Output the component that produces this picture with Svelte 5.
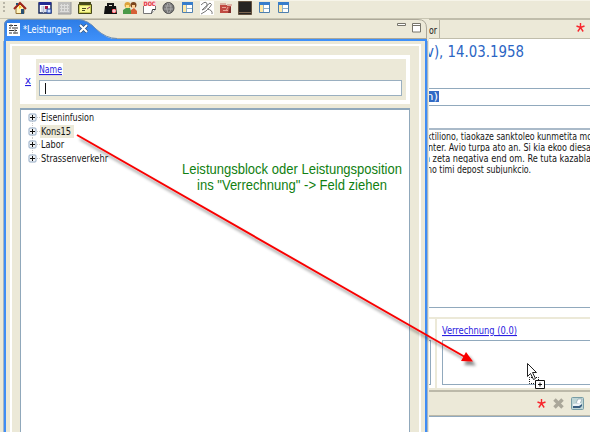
<script>
  const tree = [
    { label: 'Eiseninfusion', w: 53 },
    { label: 'Kons15', w: 30, selected: true },
    { label: 'Labor', w: 23 },
    { label: 'Strassenverkehr', w: 67 }
  ];
  const lines = [
    { text: 'ktiliono, tiaokaze sanktoleo kunmetita mo', x: -2, w: 165 },
    { text: 'nter. Avio turpa ato an. Si kia ekoo diesa', x: -1, w: 163 },
    { text: 'a zeta negativa end om. Re tuta kazabla', x: -4, w: 166 },
    { text: 'no timi depost subjunkcio.', x: -2, w: 104 }
  ];
</script>

{#snippet label(text, w, size = 11)}
  <svg class="label" width={w} height="13"><text x="0" y="10" font-size={size} textLength={w} lengthAdjust="spacingAndGlyphs">{text}</text></svg>
{/snippet}

{#snippet grid()}
  <svg width="13" height="13"><path fill="#fff" stroke="#4e7fae" d="M1.5 2.5h10v9h-10z"/><path fill="#377dcb" d="M1 1h11v3H1z"/><path stroke="#8fb2cc" d="M5.5 4v7M2 7.5h9"/><path fill="#ffe8a5" d="M2 4h3v7H2z"/></svg>
{/snippet}

{#snippet star()}
  <svg class="star" width="9" height="9"><path fill="none" stroke="#f8262c" stroke-width="1.4" d="M4.500 0v4.500M.500 3l4 1.500 4-1.500M1.800 8.500l2.700-4 2.700 4"/></svg>
{/snippet}

<div class="screen">
  <header class="toolbar">
    <i class="grip"></i>
    <svg style:margin-left="8px" width="14" height="14"><path fill="#fff4bd" stroke="#957030" d="M3 7v5.5h8V7L7 3z"/><path fill="none" stroke="#9d251d" stroke-width="2" d="m1 8 6-6 6 6"/><path fill="#285073" d="M8 8h3v5H8zM3 2h2v2H3z"/><path fill="#ffc62e" d="m6 4 3 2-3 2z"/></svg>
    <svg style:margin-left="11px" width="14" height="14"><path fill="#fff" stroke="#172a5c" stroke-width="1.5" d="M1 2h12v10H1z"/><path fill="#222b93" d="M1 1h12v3H1z"/><path stroke="#b3bdd6" d="M3 6h5M3 8h5M3 10h5M5.5 5v7"/><path fill="#a11944" d="M7 5h3v3H7z"/><path fill="#d1e3ff" stroke="#2546a6" d="M9 8h4v4H9z"/></svg>
    <svg style:margin-left="6px" width="14" height="14"><path fill="#bfbfbd" d="M0 1h13v12H0z"/><path stroke="#dededc" d="M3.5 3v8M6.5 3v8M9.5 3v8M2 4.5h9M2 7.5h9M2 10.5h9"/><path fill="none" stroke="#999" d="M13 1v12H0"/></svg>
    <svg style:margin-left="6px" width="14" height="14"><path fill="#c9ca55" stroke="#46481a" d="M.5 3.500h13v9H.5z"/><path fill="#46481a" d="M1 1h12v2H1z"/><path fill="#f8f895" d="M2 5h10v6H2z"/><path stroke="#4a4b24" d="M4 7.500h4M4 9.500h3"/><path stroke="#872e64" d="m9 8 3-2"/></svg>
    <svg style:margin-left="12px" width="14" height="14"><path fill="none" stroke="#171717" stroke-width="2" d="M4 6V3h5v3"/><path fill="#111" d="M1 5h11l1 8H0z"/><path fill="#e62935" d="M8 8h4v4H8z"/><path stroke="#fff" d="M8 10h4M10 8v4"/></svg>
    <svg style:margin-left="5px" width="15" height="14"><circle cx="4.500" cy="4" r="3" fill="#dca23c"/><path fill="#4b9a48" d="M0 13V9l3-2h4l2 6z"/><circle cx="10.500" cy="4" r="3" fill="#7c471f"/><path fill="#ffd094" d="M9 4h3v3H9z"/><path fill="#d66037" d="m8 9 3-2 3 3v3H8z"/><path fill="#ffdf83" d="M3 4h3v3H3z"/></svg>
    <svg style:margin-left="4px" width="15" height="14"><path fill="#fff" stroke="#777" d="M1.500 1v11.500h8l4-4V1z"/><path fill="#fff" stroke="#333" d="m9.500 12.500 1-4h3"/><path fill="#fbd9d9" d="M1 0h13v5H1z"/><text class="doc" x="1.500" y="5" font-size="6" font-weight="bold" textLength="12" lengthAdjust="spacingAndGlyphs">DOC</text></svg>
    <svg style:margin-left="5px" width="14" height="14"><circle cx="6.500" cy="7" r="5.500" fill="#777" stroke="#535353"/><path fill="none" stroke="#a8a8a8" d="M3 5h7M2 8h9M6 2q-3 5 0 10M7 2q4 5 0 10"/></svg>
    <span class="g first">{@render grid()}</span>
    <svg style:margin-left="6px" width="14" height="14"><path fill="#fff" d="M0 0h14v14H0z"/><path fill="none" stroke="#777" d="M1 4q5-5 6-1T2 9q4-4 8-7 3 1 0 4t-4 4l-5 3m6-5q6 1 5 5"/></svg>
    <svg style:margin-left="5px" width="14" height="14"><path fill="#c04a42" d="M1 4h11v8H1z"/><path fill="#dcb3a5" d="M1 2h6v2H1zm7 1h5v2H8z"/><path fill="none" stroke="#e9a498" d="M3 6.500h4M4 9.500h5M9 6l-2 4"/><path fill="#7f2e2b" d="M11 6h1v6h-3z"/></svg>
    <svg style:margin-left="5px" width="14" height="14"><path fill="#262423" stroke="#63513f" d="M.5.500h13v13H.500z"/><path stroke="#7d6651" d="M1 11.500h12"/></svg>
    <span class="g">{@render grid()}</span>
    <span class="g">{@render grid()}</span>
  </header>

  <main>
    <section class="view">
      <div class="tabbar">
        <svg class="tabshape" width="424" height="22">
          <defs><linearGradient id="tab" x2="0" y2="1"><stop stop-color="#2d7ce5"/><stop offset="1" stop-color="#3f91fa"/></linearGradient></defs>
          <path fill="#ece9d8" stroke="#aca899" d="M70 .500H414Q422.500.500 422.500 9V22M108 19.500H422"/>
          <path fill="url(#tab)" d="M0 22V6Q0 1 6 0H74Q84 1 92 10 102 20 113 20H423V22z"/>
          <path fill="none" stroke="#6e8eb4" d="M.500 20V6Q1 1 6 .500H74Q84 1 92 10 102 19.500 113 19.500"/>
        </svg>
        <svg class="docicon" width="13" height="13"><path fill="#fff" d="M0 0h13v13H0z"/><path stroke="#333" stroke-width="1.200" d="M2 2.500h4m1 0h3M2 5h2m1 0h6M2 7.500h5m1 0h2M2 10h3m1 0h5"/><path stroke="#777" d="M4 1v3m4 2v5"/></svg>
        <span class="tabtitle">{@render label('*Leistungen', 49)}</span>
        <svg class="close" width="9" height="9"><path stroke="#33547d" stroke-width="3.500" d="m1 1 7 7m0-7L1 8"/><path stroke="#fff" stroke-width="2" d="m1 1 7 7m0-7L1 8"/></svg>
        <svg class="minmax" width="25" height="11"><path fill="#fff" stroke="#77756b" d="M.500.500h8v2h-8zM15.500.500h8v8.500h-8zM15.500 2.500h8"/></svg>
      </div>
      <div class="viewbody">
        <div class="frame">
          <div class="filter">
            <a class="clear" href="#x">{@render label('x', 6)}</a>
            <div class="field">
              <a class="name" href="#name">{@render label('Name', 23)}</a>
              <div class="input"><i></i></div>
            </div>
          </div>
          <div class="tree">
            {#each tree as node, i}
              <div class="node">
                <svg width="13" height="13"><path stroke="#c8c8c8" stroke-dasharray="1 1" d={i === 0 ? 'M4.500 10v4M9 6.500h4' : i === 3 ? 'M4.500 0v3M9 6.500h4' : 'M4.500 0v3M4.500 10v4M9 6.500h4'}/><rect x="1" y="3" width="7" height="7" rx="1" fill="#f2f4f6" stroke="#91a9c4"/><path stroke="#111" d="M2 6.500h5M4.500 4v5"/></svg>
                <span class:selected={node.selected}>{@render label(node.label, node.w)}</span>
              </div>
            {/each}
          </div>
        </div>
      </div>
    </section>

    <section class="editor">
      <div class="edtab"><span>{@render label('or', 8)}</span><b></b>{@render star()}</div>
      <div class="patient"><svg width="105" height="26"><text x="-3" y="18" font-size="16" textLength="98" lengthAdjust="spacingAndGlyphs">v), 14.03.1958</text></svg></div>
      <div class="problem"><span><svg width="10" height="11"><text x="-3" y="9" font-size="11" textLength="12" lengthAdjust="spacingAndGlyphs">n)</text></svg></span></div>
      <div class="space"></div>
      <div class="note">
        {#each lines as line}
          <svg width="161" height="11"><text x={line.x} y="10" font-size="11" textLength={line.w} lengthAdjust="spacingAndGlyphs">{line.text}</text></svg>
        {/each}
      </div>
      <div class="bottom">
        <div class="side"><i></i></div>
        <div class="billing">
          <a href="#billing">{@render label('Verrechnung (0.0)', 75)}</a>
          <div class="drop"></div>
        </div>
      </div>
      <div class="actions">
        {@render star()}
        <svg width="11" height="11"><path stroke="#aaa79a" stroke-width="3.500" d="m1.500 1.500 8 8m0-8-8 8"/></svg>
        <svg width="13" height="13"><rect x=".5" y=".5" width="12" height="12" rx="1" fill="#bfd6d6" stroke="#789da6"/><path fill="#fff" stroke="#8aa0ac" stroke-width=".7" d="m5 6 2-4h4L9 7z"/><path fill="#eef4f7" d="m2 7 8-1 1 3-2 1H2z"/><path fill="#3a5f80" d="M2 9h6l3-2v2l-2 2H2z"/></svg>
      </div>
      <div class="rest"></div>
    </section>
  </main>

  <div class="hint">
    <svg width="224" height="34"><text x="1" y="14" textLength="220" lengthAdjust="spacingAndGlyphs">Leistungsblock oder Leistungsposition</text><text x="16" y="30" textLength="190" lengthAdjust="spacingAndGlyphs">ins "Verrechnung" -&gt; Feld ziehen</text></svg>
  </div>
  <svg class="overlay" width="590" height="432">
    <defs><filter id="shadow" x="-10%" y="-10%" width="125%" height="125%"><feDropShadow dx="3" dy="4" stdDeviation="1.800" flood-color="#000" flood-opacity=".45"/></filter></defs>
    <g filter="url(#shadow)"><path stroke="#f80606" stroke-width="1.900" d="M77 135 465 357"/><path fill="#f80606" d="m473 361.500-12-.5 5-9z"/></g>
    <path fill="none" stroke="#111" stroke-dasharray="1 1" d="M534 377.500h-4.500v6h6M534 377.500h4.500v3"/>
    <path fill="#fff" stroke="#222" d="M527.500 363.500v13l3-3 3 6 2-1-3-6h4z"/>
    <path fill="#fff" stroke="#111" d="M535.500 380.500h9v8h-9z"/><path stroke="#111" d="M538 384.500h4M540 382.500v4"/>
  </svg>
</div>

<style>
  :global(body) { margin: 0; overflow: hidden; }
  .screen { position: relative; width: 590px; height: 432px; overflow: hidden; background: #ece9d8; display: flex; flex-direction: column; font-family: "DejaVu Sans Condensed", "DejaVu Sans", sans-serif; font-size: 11px; }
  svg { display: block; flex: none; }
  .label { overflow: visible; }
  text { fill: #161616; }
  text.doc { fill: #e0303c; }
  a { color: #2a20e0; text-decoration: none; }
  a :global(text) { fill: #2a20e0; text-decoration: underline; }
  .toolbar { height: 18px; box-sizing: border-box; border-top: 1px solid #f6f4e9; display: flex; align-items: flex-start; flex: none; }
  .grip { width: 2px; height: 12px; margin-left: 3px; margin-top: 1px; background: repeating-linear-gradient(#b8b5a7 0 2px, transparent 2px 4px); }
  .g { margin-left: 6px; }
  .g.first { margin-left: 5px; }
  main { height: 414px; display: flex; }
  .view { width: 429px; display: flex; flex-direction: column; border-top: 1px solid #c8c5b2; box-sizing: border-box; }
  .tabbar { height: 22px; position: relative; margin-left: 4px; display: flex; flex: none; }
  .tabshape { position: absolute; left: 0; top: 0; }
  .tabbar > :not(.tabshape) { position: relative; }
  .docicon { margin: 4px 0 0 3px; }
  .tabtitle { margin: 4px 0 0 3px; }
  .tabtitle :global(text) { fill: #fff; }
  .close { margin: 5px 0 0 7px; }
  .minmax { margin: 4px 7px 0 auto; }
  .viewbody { flex: 1; margin: 0 2px 0 4px; border: solid #3f8df5; border-width: 0 2px; box-shadow: -1px 0 #a6b5c2, 1px 0 #a6b5c2; padding: 3px 4px 0 4px; }
  .frame { height: 100%; box-sizing: border-box; border: 2px solid #fff; border-bottom: 0; padding: 9px 9px 0 8px; display: flex; flex-direction: column; }
  .filter { height: 49px; background: #fff; flex: none; display: flex; box-sizing: border-box; padding: 4px 4px 4px 0; }
  .clear { width: 11px; margin: 15px 0 0 5px; }
  .field { flex: 1; background: #ece9d8; padding: 4px 4px 4px 3px; display: flex; flex-direction: column; }
  .name { width: 24px; height: 12px; background: #fff; margin-bottom: 5px; }
  .input { flex: 1; background: #fff; border: 1px solid #9aafc0; display: flex; }
  .input i { width: 1px; height: 11px; background: #111; margin: 2px 0 0 5px; }
  .tree { flex: 1; margin-top: 4px; background: #fff; border: 1px solid #90a8bb; border-width: 2px 1px 0; padding: 1px 0 0 7px; }
  .node { height: 13.500px; display: flex; }
  .node span { margin: 0; height: 13px; }
  .node span.selected { background: #ece9d8; padding: 0 3px 0 1px; margin-left: -1px; }
  .editor { flex: 1; min-width: 0; background: #fff; display: flex; flex-direction: column; }
  .edtab { height: 21px; box-sizing: border-box; background: #ece9d8; border: solid #c0bdab; border-width: 2px 0 1px; display: flex; flex: none; }
  .edtab span { width: 10px; margin-top: 4px; }
  .edtab b { width: 1px; background: #b8b4a3; }
  .edtab :global(.star) { margin: 3px 5px 0 auto; }
  .patient { height: 49px; font-family: "DejaVu Sans", sans-serif; border-bottom: 1px solid #91a9bd; flex: none; }
  .patient text { fill: #2b65c4; }
  .problem { height: 16px; border-bottom: 1px solid #91a9bd; flex: none; }
  .problem span { display: block; width: 10px; height: 11px; background: #316ac5; margin-top: 2px; }
  .problem text { fill: #fff; }
  .space { height: 22px; border-bottom: 2px solid #aabac9; flex: none; }
  .note { height: 177px; border-bottom: 1px solid #91a9bd; flex: none; }
  .bottom { height: 73px; margin-top: 9px; border: solid #ece9d8; border-width: 2px 0; display: flex; flex: none; box-sizing: border-box; }
  .side { width: 8px; box-sizing: border-box; border-right: 2px solid #ece9d8; padding-top: 21px; }
  .side i { display: block; width: 1px; height: 43px; border: solid #91a9bd; border-width: 1px 1px 1px 0; }
  .billing { flex: 1; margin-left: 5px; padding-top: 5px; }
  .billing a { display: block; height: 16px; }
  .drop { height: 43px; border: 1px solid #91a9bd; border-right: 0; }
  .actions { height: 26px; box-sizing: border-box; background: #ece9d8; border: solid #bcb9a9; border-width: 2px 0 1px; display: flex; flex: none; align-items: center; justify-content: flex-end; gap: 7px; padding-right: 6px; }
  .rest { flex: 1; border-top: 1px solid #91a9bd; }
  .hint { position: absolute; left: 181px; top: 160px; font: 14px "Liberation Sans", Arial, sans-serif; }
  .hint text { fill: #118011; }
  .overlay { position: absolute; left: 0; top: 0; pointer-events: none; }
</style>
